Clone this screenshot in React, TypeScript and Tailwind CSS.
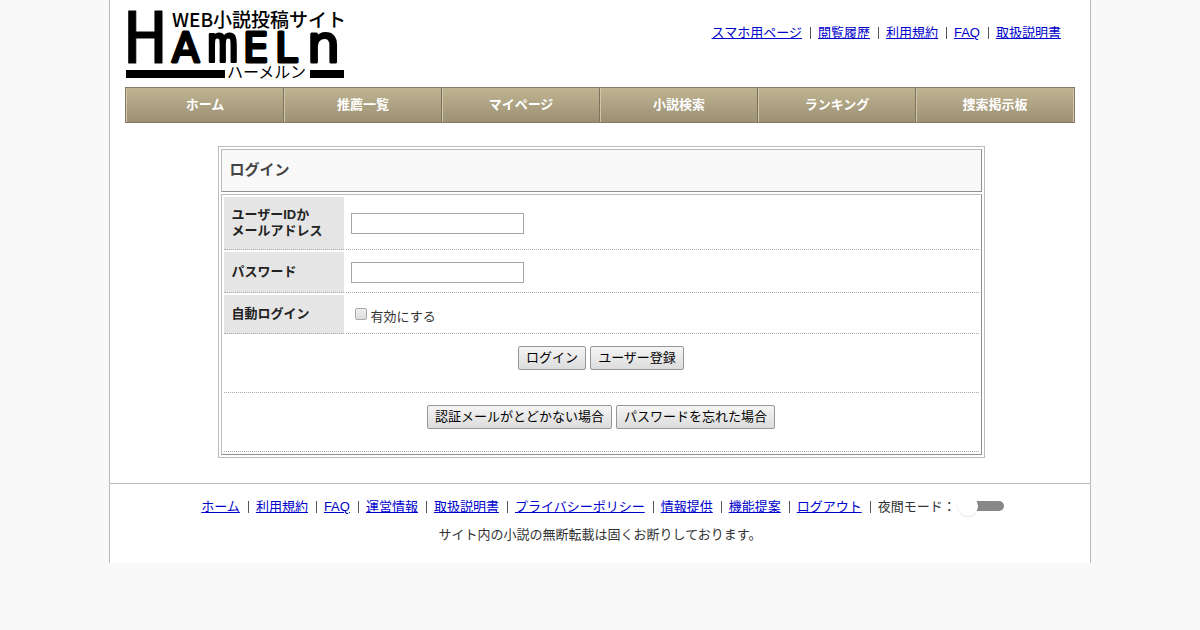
import { useState } from "react";

const headerLinks = ["スマホ用ページ", "閲覧履歴", "利用規約", "FAQ", "取扱説明書"];
const navItems = ["ホーム", "推薦一覧", "マイページ", "小説検索", "ランキング", "捜索掲示板"];
const footerLinks = [
  "ホーム",
  "利用規約",
  "FAQ",
  "運営情報",
  "取扱説明書",
  "プライバシーポリシー",
  "情報提供",
  "機能提案",
  "ログアウト",
];

const Logo = () => (
  <svg
    width="220"
    height="70"
    viewBox="0 0 220 70"
    role="img"
    aria-label="HAMELN"
    className="overflow-visible"
  >
    <g fill="#000" stroke="#000" strokeWidth="3" strokeLinejoin="round" fontFamily="'DejaVu Sans', sans-serif">
      <text x="-2" y="53" fontSize="71" strokeWidth="1" fontFamily="'DejaVu Sans Mono', monospace">
        H
      </text>
      <text x="46" y="52" fontSize="40">
        A
      </text>
      <text x="81" y="52" fontSize="52" strokeWidth="2" fontFamily="'DejaVu Sans Mono', monospace">
        m
      </text>
      <text x="117" y="52" fontSize="40">
        E
      </text>
      <text x="149" y="52" fontSize="40">
        L
      </text>
      <text x="181" y="52" fontSize="52">
        n
      </text>
    </g>
    <g fill="#000" fontFamily="'Noto Sans CJK JP', sans-serif" fontWeight="500">
      <text x="46" y="17" fontSize="19">
        WEB小説投稿サイト
      </text>
      <text x="101" y="68" fontSize="16" fontWeight="400">
        ハーメルン
      </text>
    </g>
    <rect x="0" y="60" width="99" height="8" />
    <rect x="184" y="60" width="34" height="8" />
  </svg>
);

const LinkList = ({ items }: { items: string[] }) => (
  <>
    {items.map((item, i) => (
      <li key={item} className="flex items-center">
        {i > 0 && <span className="mr-[7px] ml-2 h-3 w-px bg-[#555]" />}
        <a href="#" className="text-[#0000cc] underline">
          {item}
        </a>
      </li>
    ))}
  </>
);

const inputClass = "ml-[5px] h-[21px] w-[173px] border border-[#a5a5a5] bg-white px-1";
const labelClass = "flex w-[120px] shrink-0 items-center border-b border-dotted border-[#aaa] bg-[#e5e5e5] pl-2 font-bold text-[#222]";
const fieldClass = "flex grow items-center border-b border-dotted border-[#aaa]";
const buttonClass =
  "h-6 rounded-[2px] border border-[#979797] bg-linear-to-b from-[#f5f5f5] to-[#dcdcdc] px-[7px] leading-4 text-black";
const cellClass = "border border-t-[#bbb] border-r-[#909090] border-b-[#909090] border-l-[#bbb]";

const App = () => {
  const [userId, setUserId] = useState("");
  const [password, setPassword] = useState("");
  const [auto, setAuto] = useState(false);
  const [night, setNight] = useState(false);

  return (
    <div className="min-h-screen bg-[#f9f9f9] font-['Liberation_Sans','Noto_Sans_CJK_JP',sans-serif] text-[13px] leading-4 text-[#333]">
      <div className="mx-auto max-w-[982px] border-x border-[#bbb] bg-white">
        <header className="flex items-start justify-between pt-[10px] pr-[29px] pl-4">
          <Logo />
          <ul className="flex pt-[15px]">
            <LinkList items={headerLinks} />
          </ul>
        </header>

        <nav className="mx-[15px] mt-[7px]">
          <ul className="flex border border-[#857b63] bg-linear-to-b from-[#bfb491] to-[#9c9074]">
            {navItems.map((item) => (
              <li
                key={item}
                className="flex-1 border-r border-l border-r-[#7d735c] border-l-[#d0c7aa] last:border-r-[#d0c7aa]"
              >
                <a href="#" className="block py-[9px] text-center font-bold text-white">
                  {item}
                </a>
              </li>
            ))}
          </ul>
        </nav>

        <main className="mx-auto mt-[23px] mb-[25px] max-w-[767px] translate-x-px border border-[#bbb] p-[2px]">
          <h1 className={`${cellClass} bg-[#f9f9f9] px-2 pt-[9px] pb-[11px] text-[15px] leading-[21px] font-bold text-[#444]`}>
            ログイン
          </h1>
          <form
            onSubmit={(e) => e.preventDefault()}
            className={`${cellClass} mt-[2px] flex flex-col gap-[2px] p-[2px]`}
          >
            <div className="flex h-[53px] gap-[2px]">
              <label htmlFor="userId" className={labelClass}>
                ユーザーIDか
                <br />
                メールアドレス
              </label>
              <div className={fieldClass}>
                <input
                  id="userId"
                  type="text"
                  value={userId}
                  onChange={(e) => setUserId(e.target.value)}
                  className={inputClass}
                />
              </div>
            </div>
            <div className="flex h-[41px] gap-[2px]">
              <label htmlFor="password" className={labelClass}>
                パスワード
              </label>
              <div className={fieldClass}>
                <input
                  id="password"
                  type="password"
                  value={password}
                  onChange={(e) => setPassword(e.target.value)}
                  className={inputClass}
                />
              </div>
            </div>
            <div className="flex h-[39px] gap-[2px]">
              <label htmlFor="auto" className={labelClass}>
                自動ログイン
              </label>
              <div className={fieldClass}>
                <input
                  id="auto"
                  type="checkbox"
                  checked={auto}
                  onChange={(e) => setAuto(e.target.checked)}
                  className="mr-1 ml-[9px] size-3 appearance-none rounded-[2px] border border-[#aaa] bg-linear-to-b from-[#eee] to-[#ddd] checked:from-[#666] checked:to-[#444]"
                />
                <label htmlFor="auto" className="pt-[5px]">
                  有効にする
                </label>
              </div>
            </div>
            <div className="flex justify-center gap-1 border-b border-dotted border-[#aaa] pt-[10px] pb-[22px]">
              <button type="submit" className={buttonClass}>
                ログイン
              </button>
              <button type="button" className={buttonClass}>
                ユーザー登録
              </button>
            </div>
            <div className="flex justify-center gap-1 border-b border-dotted border-[#aaa] pt-[10px] pb-[22px]">
              <button type="button" className={buttonClass}>
                認証メールがとどかない場合
              </button>
              <button type="button" className={buttonClass}>
                パスワードを忘れた場合
              </button>
            </div>
          </form>
        </main>

        <footer className="border-t border-[#bbb] pt-[15px] pb-5 text-center">
          <ul className="flex flex-wrap justify-center pl-[5px]">
            <LinkList items={footerLinks} />
            <li className="flex items-center">
              <span className="mr-[7px] ml-2 h-3 w-px bg-[#555]" />
              <label htmlFor="night">夜間モード：</label>
              <span className="relative ml-1 flex h-[14px] w-11 items-center self-start">
                <input
                  id="night"
                  type="checkbox"
                  role="switch"
                  checked={night}
                  onChange={(e) => setNight(e.target.checked)}
                  className="peer h-[10px] w-11 appearance-none rounded-full bg-[#888]"
                />
                <span className="pointer-events-none absolute top-[-3px] left-[-2px] size-5 rounded-full bg-white shadow-[0_1px_2px_rgba(0,0,0,0.12)] peer-checked:left-[26px]" />
              </span>
            </li>
          </ul>
          <p className="mt-3">サイト内の小説の無断転載は固くお断りしております。</p>
        </footer>
      </div>
    </div>
  );
};

export default App;
